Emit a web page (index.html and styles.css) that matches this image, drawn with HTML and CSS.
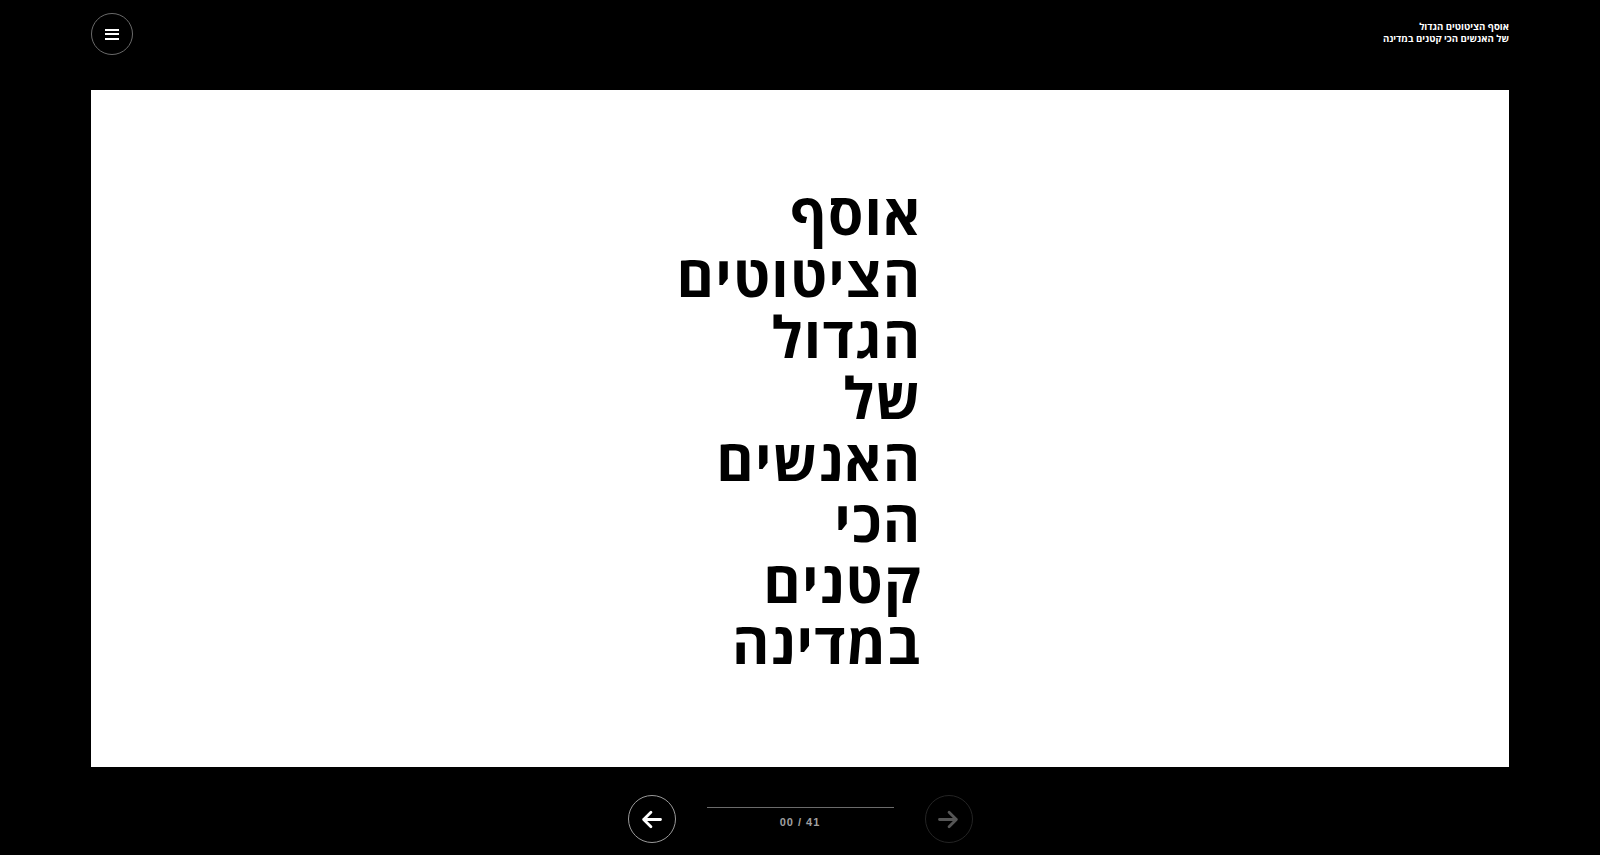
FILE: index.html
```html
<!DOCTYPE html>
<html lang="he">
<head>
<meta charset="utf-8">
<title>אוסף הציטוטים הגדול של האנשים הכי קטנים במדינה</title>
<link rel="stylesheet" href="styles.css">
</head>
<body>
<div class="page">
  <header class="top">
    <button class="menu-btn" aria-label="menu">
      <span class="bar"></span><span class="bar"></span><span class="bar"></span>
    </button>
    <div class="site-title" dir="rtl">
      <div>אוסף הציטוטים הגדול</div>
      <div>של האנשים הכי קטנים במדינה</div>
    </div>
  </header>
  <main class="stage">
    <h1 class="headline" dir="rtl"><span class="word">אוסף</span> <span class="word">הציטוטים</span> <span class="word">הגדול</span> <span class="word">של</span> <span class="word">האנשים</span> <span class="word">הכי</span> <span class="word">קטנים</span> <span class="word">במדינה</span></h1>
  </main>
  <footer class="nav">
    <button class="nav-btn prev" aria-label="previous">
      <svg viewBox="0 0 24 24" width="27" height="27"><path d="M20 12H5M11.5 5.5 5 12l6.5 6.5" fill="none" stroke="currentColor" stroke-width="2.5" stroke-linecap="round" stroke-linejoin="round"/></svg>
    </button>
    <div class="progress">
      <div class="track"></div>
      <div class="count">00 / 41</div>
    </div>
    <button class="nav-btn next" aria-label="next">
      <svg viewBox="0 0 24 24" width="27" height="27"><path d="M4 12h15M12.5 5.5 19 12l-6.5 6.5" fill="none" stroke="currentColor" stroke-width="2.5" stroke-linecap="round" stroke-linejoin="round"/></svg>
    </button>
  </footer>
</div>
</body>
</html>
```

FILE: styles.css
```css
html, body {
  margin: 0;
  padding: 0;
  background: #000;
  height: 100%;
}
body {
  font-family: "Liberation Sans", "DejaVu Sans", sans-serif;
  color: #fff;
}
.page {
  height: 855px;
  padding: 0 91px;
  display: flex;
  flex-direction: column;
  box-sizing: border-box;
}
.top {
  height: 90px;
  display: flex;
  justify-content: space-between;
  align-items: flex-start;
  padding-top: 13px;
  box-sizing: border-box;
  flex: none;
}
.menu-btn {
  width: 42px;
  height: 42px;
  border-radius: 50%;
  border: 1px solid #6a6a6a;
  background: #000;
  display: flex;
  flex-direction: column;
  align-items: center;
  justify-content: center;
  gap: 2.5px;
  padding: 0;
  cursor: pointer;
}
.bar {
  display: block;
  width: 14px;
  height: 2px;
  background: #fff;
}
.site-title {
  margin-top: 8px;
  font-family: "Open Sans", "DejaVu Sans", sans-serif;
  font-size: 9.6px;
  font-weight: 700;
  line-height: 12px;
  text-align: right;
  color: #fff;
}
.stage {
  height: 677px;
  background: #fff;
  display: flex;
  align-items: center;
  justify-content: center;
  flex: none;
}
.headline {
  margin: 0 0 0 -2px;
  font-family: "Open Sans", "DejaVu Sans", sans-serif;
  font-size: 57px;
  line-height: 61.3px;
  letter-spacing: 1.3px;
  font-weight: 700;
  color: #000;
  text-align: right;
}
.word {
  display: block;
}
.nav {
  display: flex;
  justify-content: center;
  align-items: center;
  padding-top: 28px;
  gap: 31px;
}
.nav-btn {
  width: 48px;
  height: 48px;
  border-radius: 50%;
  background: #000;
  padding: 0;
  display: flex;
  align-items: center;
  justify-content: center;
  cursor: pointer;
}
.prev {
  border: 1px solid #9a9a9a;
  color: #fff;
}
.next {
  border: 1px solid #242424;
  color: #555;
}
.progress {
  width: 187px;
  display: flex;
  flex-direction: column;
  align-items: center;
  margin-top: -3px;
}
.track {
  width: 100%;
  height: 1px;
  background: #6b6b6b;
}
.count {
  margin-top: 8px;
  font-size: 11px;
  font-weight: bold;
  letter-spacing: 1px;
  color: #a0a0a0;
}
```
